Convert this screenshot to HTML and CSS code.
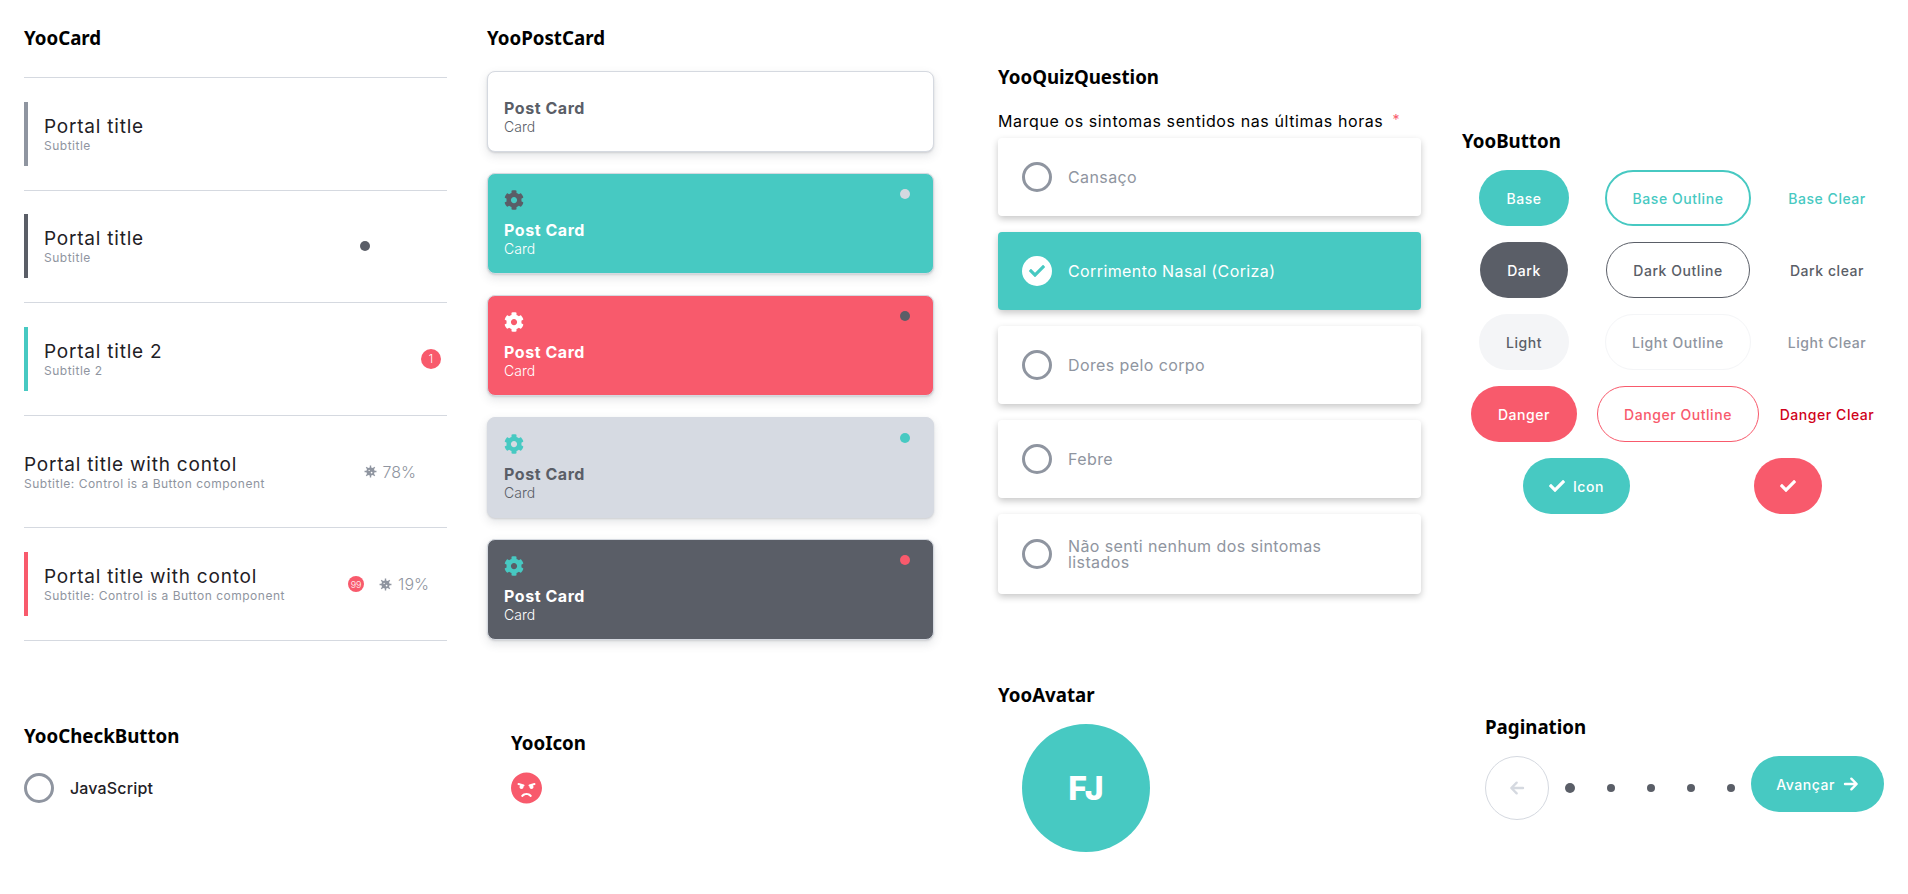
FILE: index.html
```html
<!DOCTYPE html>
<html lang="en">
<head>
    <meta charset="UTF-8">
    <meta name="viewport" content="width=device-width, initial-scale=1.0">
    <title>Yoo Components</title>

    <link rel="stylesheet" href="styles.css">
</head>
<body>
    <!-- Icon sprites -->
    <svg class="sprites" aria-hidden="true">
        <symbol id="i-cog" viewBox="0 0 512 512">
            <path d="M487.4 315.7l-42.6-24.6c4.3-23.2 4.3-47 0-70.2l42.6-24.6c4.9-2.8 7.1-8.6 5.5-14-11.1-35.6-30-67.8-54.7-94.6-3.8-4.1-10-5.1-14.8-2.3L380.8 110c-17.9-15.4-38.5-27.3-60.8-35.1V25.8c0-5.6-3.9-10.5-9.4-11.7-36.7-8.2-74.3-7.8-109.2 0-5.5 1.2-9.4 6.1-9.4 11.7V75c-22.2 7.9-42.8 19.8-60.8 35.1L88.7 85.5c-4.9-2.8-11-1.9-14.8 2.3-24.7 26.7-43.6 58.9-54.7 94.6-1.7 5.4.6 11.2 5.5 14L67.3 221c-4.3 23.2-4.3 47 0 70.2l-42.6 24.6c-4.9 2.8-7.1 8.6-5.5 14 11.1 35.6 30 67.8 54.7 94.6 3.8 4.1 10 5.1 14.8 2.3l42.6-24.6c17.9 15.4 38.5 27.3 60.8 35.1v49.2c0 5.6 3.9 10.5 9.4 11.7 36.7 8.2 74.3 7.8 109.2 0 5.5-1.2 9.4-6.1 9.4-11.7v-49.2c22.2-7.9 42.8-19.8 60.8-35.1l42.6 24.6c4.9 2.8 11 1.9 14.8-2.3 24.7-26.7 43.6-58.9 54.7-94.6 1.5-5.5-.7-11.3-5.6-14.1zM256 336c-44.1 0-80-35.9-80-80s35.9-80 80-80 80 35.9 80 80-35.9 80-80 80z"/>
        </symbol>
        <symbol id="i-check" viewBox="0 0 512 512">
            <path d="M173.898 439.404l-166.4-166.4c-9.997-9.997-9.997-26.206 0-36.204l36.203-36.204c9.997-10 26.207-10 36.204 0L192 312.69 432.095 72.596c9.997-9.997 26.207-9.997 36.204 0l36.203 36.204c9.997 9.997 9.997 26.206 0 36.204l-294.4 294.401c-9.998 9.997-26.207 9.997-36.204-.001z"/>
        </symbol>
        <symbol id="i-virus" viewBox="0 0 24 24">
            <circle cx="12" cy="12" r="7.5"/>
            <path d="M12 1v22M1 12h22M4.2 4.2l15.6 15.6M19.8 4.2L4.2 19.8" stroke="currentColor" stroke-width="2.6"/>
            <circle cx="9.5" cy="10" r="1.2" fill="#fff"/>
            <circle cx="14" cy="14" r="1.6" fill="#fff"/>
        </symbol>
        <symbol id="i-angry" viewBox="0 0 496 512">
            <path d="M248 8C111 8 0 119 0 256s111 248 248 248 248-111 248-248S385 8 248 8zM136 240c0-9.3 4.1-17.5 10.5-23.4l-31-9.3c-8.5-2.5-13.3-11.5-10.7-19.9 2.5-8.5 11.4-13.2 19.9-10.7l80 24c8.5 2.5 13.3 11.5 10.7 19.9-2.1 6.9-8.4 11.4-15.3 11.4-.5 0-1.1-.2-1.7-.2.7 2.7 1.7 5.3 1.7 8.2 0 17.7-14.3 32-32 32S136 257.7 136 240zm168 154.2c-27.8-33.4-84.2-33.4-112.1 0-13.5 16.3-38.2-4.2-24.6-20.5 20-24 49.4-37.8 80.6-37.8s60.6 13.8 80.6 37.8c13.8 16.5-11.1 36.6-24.5 20.5zm76.6-186.9l-31 9.3c6.3 5.8 10.5 14.1 10.5 23.4 0 17.7-14.3 32-32 32s-32-14.3-32-32c0-2.9.9-5.6 1.7-8.2-.6.1-1.1.2-1.7.2-6.9 0-13.2-4.5-15.3-11.4-2.5-8.5 2.3-17.4 10.7-19.9l80-24c8.4-2.5 17.4 2.3 19.9 10.7 2.5 8.5-2.3 17.4-10.8 19.9z"/>
        </symbol>
        <symbol id="i-arrow" viewBox="0 0 24 24">
            <path d="M3 12h17M12.5 4l8 8-8 8" fill="none" stroke="currentColor" stroke-width="3.6" stroke-linecap="round" stroke-linejoin="round"/>
        </symbol>
    </svg>

    <main class="page">
        <!-- YooCard -->
        <section class="col-card">
            <h3 class="heading">YooCard</h3>
            <div class="card-list">
                <div class="card-row">
                    <div class="card-text bar bar-gray">
                        <div class="card-title">Portal title</div>
                        <div class="card-sub">Subtitle</div>
                    </div>
                </div>
                <div class="card-row">
                    <div class="card-text bar bar-dark">
                        <div class="card-title">Portal title</div>
                        <div class="card-sub">Subtitle</div>
                    </div>
                    <div class="control control-dot"><span class="dot dot-dark"></span></div>
                </div>
                <div class="card-row">
                    <div class="card-text bar bar-base">
                        <div class="card-title">Portal title 2</div>
                        <div class="card-sub">Subtitle 2</div>
                    </div>
                    <div class="control control-badge"><span class="badge">1</span></div>
                </div>
                <div class="card-row">
                    <div class="card-text">
                        <div class="card-title">Portal title with contol</div>
                        <div class="card-sub">Subtitle: Control is a Button component</div>
                    </div>
                    <div class="control control-pct">
                        <svg class="virus"><use href="#i-virus"/></svg>
                        <span class="pct">78%</span>
                    </div>
                </div>
                <div class="card-row">
                    <div class="card-text bar bar-danger">
                        <div class="card-title">Portal title with contol</div>
                        <div class="card-sub">Subtitle: Control is a Button component</div>
                    </div>
                    <div class="control control-both">
                        <span class="badge badge-small">99</span>
                        <svg class="virus"><use href="#i-virus"/></svg>
                        <span class="pct">19%</span>
                    </div>
                </div>
            </div>
        </section>

        <!-- YooPostCard -->
        <section class="col-post">
            <h3 class="heading">YooPostCard</h3>
            <div class="post-list">
                <div class="post post-white">
                    <div class="post-title">Post Card</div>
                    <div class="post-sub">Card</div>
                </div>
                <div class="post post-base">
                    <div class="post-top">
                        <svg class="cog"><use href="#i-cog"/></svg>
                        <span class="dot"></span>
                    </div>
                    <div class="post-title">Post Card</div>
                    <div class="post-sub">Card</div>
                </div>
                <div class="post post-danger">
                    <div class="post-top">
                        <svg class="cog"><use href="#i-cog"/></svg>
                        <span class="dot"></span>
                    </div>
                    <div class="post-title">Post Card</div>
                    <div class="post-sub">Card</div>
                </div>
                <div class="post post-light">
                    <div class="post-top">
                        <svg class="cog"><use href="#i-cog"/></svg>
                        <span class="dot"></span>
                    </div>
                    <div class="post-title">Post Card</div>
                    <div class="post-sub">Card</div>
                </div>
                <div class="post post-dark">
                    <div class="post-top">
                        <svg class="cog"><use href="#i-cog"/></svg>
                        <span class="dot"></span>
                    </div>
                    <div class="post-title">Post Card</div>
                    <div class="post-sub">Card</div>
                </div>
            </div>
        </section>

        <!-- YooQuizQuestion -->
        <section class="col-quiz">
            <h3 class="heading">YooQuizQuestion</h3>
            <div class="quiz-label">Marque os sintomas sentidos nas últimas horas <span class="required">*</span></div>
            <div class="quiz-list">
                <div class="option"><span class="radio"></span><span>Cansaço</span></div>
                <div class="option option-on">
                    <span class="radio radio-on"><svg class="radio-check"><use href="#i-check"/></svg></span>
                    <span>Corrimento Nasal (Coriza)</span>
                </div>
                <div class="option"><span class="radio"></span><span>Dores pelo corpo</span></div>
                <div class="option"><span class="radio"></span><span>Febre</span></div>
                <div class="option option-tall"><span class="radio"></span><span class="option-wrap">Não senti nenhum dos sintomas listados</span></div>
            </div>
        </section>

        <!-- YooButton -->
        <section class="col-button">
            <h3 class="heading">YooButton</h3>
            <div class="button-grid">
                <button class="btn btn-base">Base</button>
                <button class="btn out-base">Base Outline</button>
                <button class="btn clear-base">Base Clear</button>
                <button class="btn btn-dark">Dark</button>
                <button class="btn out-dark">Dark Outline</button>
                <button class="btn clear-dark">Dark clear</button>
                <button class="btn btn-light">Light</button>
                <button class="btn out-light">Light Outline</button>
                <button class="btn clear-light">Light Clear</button>
                <button class="btn btn-danger">Danger</button>
                <button class="btn out-danger">Danger Outline</button>
                <button class="btn clear-danger">Danger Clear</button>
            </div>
            <div class="button-icons">
                <button class="btn btn-base btn-with-icon"><svg class="btn-icon"><use href="#i-check"/></svg>Icon</button>
                <button class="btn btn-danger btn-round"><svg class="btn-icon"><use href="#i-check"/></svg></button>
            </div>
        </section>

        <!-- YooCheckButton -->
        <section class="col-check">
            <h3 class="heading">YooCheckButton</h3>
            <div class="check-button"><span class="radio"></span><span>JavaScript</span></div>
        </section>

        <!-- YooIcon -->
        <section class="col-icon">
            <h3 class="heading">YooIcon</h3>
            <svg class="angry"><use href="#i-angry"/></svg>
        </section>

        <!-- YooAvatar -->
        <section class="col-avatar">
            <h3 class="heading">YooAvatar</h3>
            <div class="avatar">FJ</div>
        </section>

        <!-- Pagination -->
        <section class="col-pagination">
            <h3 class="heading">Pagination</h3>
            <div class="pagination">
                <button class="page-prev"><svg class="prev-icon"><use href="#i-arrow"/></svg></button>
                <div class="page-dots">
                    <span class="page-dot page-dot-on"></span>
                    <span class="page-dot"></span>
                    <span class="page-dot"></span>
                    <span class="page-dot"></span>
                    <span class="page-dot"></span>
                </div>
                <button class="btn btn-base page-next">Avançar<svg class="next-icon"><use href="#i-arrow"/></svg></button>
            </div>
        </section>
    </main>
</body>
</html>
```

FILE: styles.css
```css
body {
    margin: 0;
    background: #ffffff;
    color: #1f2126;
    font-family: 'Inter', 'Liberation Sans', sans-serif;
}

.sprites {
    display: none;
}

.page {
    display: grid;
    grid-template-columns: 487px 511px 464px 446px;
    grid-template-rows: 660px auto;
    align-items: start;
}

.heading {
    margin: 0;
    font-family: 'Noto Sans', sans-serif;
    font-size: 18.72px;
    font-weight: 700;
    line-height: 26px;
    color: #000000;
}

/* YooCard */
.col-card {
    padding: 25px 40px 0 24px;
}

.card-list {
    margin-top: 26px;
    border-top: 1px solid #d5d9e0;
}

.card-row {
    display: flex;
    justify-content: space-between;
    align-items: center;
    height: 112.6px;
    box-sizing: border-box;
    border-bottom: 1px solid #d5d9e0;
}

.card-text {
    box-sizing: border-box;
    padding-top: 4px;
}

.card-title {
    font-size: 19px;
    line-height: 19px;
    letter-spacing: 0.78px;
}

.card-sub {
    font-size: 12px;
    line-height: 19px;
    color: #8f95a0;
    letter-spacing: 0.5px;
}

.bar {
    display: flex;
    flex-direction: column;
    justify-content: center;
    height: 64px;
    padding-left: 16px;
    border-left: 4px solid;
}

.bar-gray {
    border-color: #8f95a0;
}

.bar-dark {
    border-color: #5a5e67;
}

.bar-base {
    border-color: #47c9c2;
}

.bar-danger {
    border-color: #f85a6c;
}

.control {
    display: flex;
    align-items: center;
}

.control-dot {
    margin-right: 77px;
}

.control-badge {
    margin-right: 6px;
}

.control-pct {
    margin-right: 31px;
}

.control-both {
    margin-right: 18px;
}

.dot {
    display: block;
    width: 10px;
    height: 10px;
    border-radius: 50%;
}

.dot-dark {
    background: #5a5e67;
}

.badge {
    display: flex;
    align-items: center;
    justify-content: center;
    width: 20px;
    height: 20px;
    border-radius: 50%;
    background: #f85a6c;
    color: #ffffff;
    font-size: 11px;
    font-weight: 300;
}

.badge-small {
    width: 16px;
    height: 16px;
    margin-right: 15px;
    font-size: 9px;
}

.virus {
    width: 13px;
    height: 13px;
    margin-right: 6px;
    fill: #8f95a0;
    color: #8f95a0;
}

.pct {
    font-size: 16px;
    font-weight: 300;
    color: #8f95a0;
}

/* YooPostCard */
.col-post {
    padding-top: 25px;
    width: 447px;
}

.post-list {
    display: flex;
    flex-direction: column;
    gap: 21px;
    margin-top: 20px;
}

.post {
    box-sizing: border-box;
    height: 101px;
    padding: 16px 23px 0 16px;
    border: 1px solid #d5d9e0;
    border-radius: 8px;
    box-shadow: 0 1px 2px rgba(90, 94, 103, 0.2), 0 4px 10px rgba(90, 94, 103, 0.16);
}

.post-white {
    height: 81px;
    padding-top: 26px;
    background: #ffffff;
    color: #5a5e67;
}

.post-top {
    display: flex;
    justify-content: space-between;
    align-items: flex-start;
    height: 30px;
}

.post-top .dot {
    margin-top: -1px;
}

.cog {
    width: 20px;
    height: 20px;
}

.post-title {
    font-size: 16px;
    font-weight: 700;
    line-height: 21px;
    letter-spacing: 0.55px;
}

.post-sub {
    font-size: 14px;
    font-weight: 300;
    line-height: 15px;
}

.post-base {
    background: #47c9c2;
    color: #ffffff;
}

.post-base .cog {
    fill: #5a5e67;
}

.post-base .dot {
    background: #d5d9e0;
}

.post-danger {
    background: #f85a6c;
    color: #ffffff;
}

.post-danger .cog {
    fill: #ffffff;
}

.post-danger .dot {
    background: #5a5e67;
}

.post-light {
    background: #d6dae2;
    border-color: #d6dae2;
    color: #5a5e67;
}

.post-light .cog {
    fill: #47c9c2;
}

.post-light .dot {
    background: #47c9c2;
}

.post-dark {
    background: #5a5e67;
    color: #ffffff;
}

.post-dark .cog {
    fill: #47c9c2;
}

.post-dark .dot {
    background: #f85a6c;
}

/* YooQuizQuestion */
.col-quiz {
    padding-top: 64px;
    width: 423px;
}

.quiz-label {
    margin-top: 19px;
    font-size: 16px;
    line-height: 22px;
    letter-spacing: 0.6px;
    color: #000000;
    white-space: nowrap;
}

.required {
    margin-left: 4px;
    color: #f85a6c;
    font-size: 14px;
    vertical-align: 2px;
}

.quiz-list {
    display: flex;
    flex-direction: column;
    gap: 16px;
    margin-top: 6px;
}

.option {
    display: flex;
    align-items: center;
    gap: 16px;
    box-sizing: border-box;
    height: 78px;
    padding: 0 24px;
    border-radius: 4px;
    background: #ffffff;
    box-shadow: 0 3px 7px rgba(0, 0, 0, 0.22);
    font-size: 16px;
    line-height: 16px;
    letter-spacing: 0.4px;
    color: #8f95a0;
}

.option-on {
    background: #47c9c2;
    color: #ffffff;
}

.option-tall {
    height: 80px;
}

.option-wrap {
    max-width: 300px;
}

.radio {
    display: flex;
    align-items: center;
    justify-content: center;
    flex: none;
    box-sizing: border-box;
    width: 30px;
    height: 30px;
    border: 3px solid #8f95a0;
    border-radius: 50%;
}

.radio-on {
    border: none;
    background: #ffffff;
}

.radio-check {
    width: 16px;
    height: 16px;
    fill: #47c9c2;
}

/* YooButton */
.col-button {
    padding-top: 128px;
}

.button-grid {
    display: grid;
    grid-template-columns: 124px 184px 114px;
    gap: 16px 0;
    justify-items: center;
    margin-top: 16px;
}

.button-icons {
    display: grid;
    grid-template-columns: 229px 194px;
    justify-items: center;
    margin-top: 16px;
}

.btn {
    display: flex;
    align-items: center;
    justify-content: center;
    box-sizing: border-box;
    height: 56px;
    padding: 0 26px;
    border: 1px solid transparent;
    border-radius: 28px;
    background: transparent;
    font-family: 'Inter', 'Liberation Sans', sans-serif;
    font-size: 14px;
    font-weight: 500;
    letter-spacing: 0.55px;
    white-space: nowrap;
}

.btn-base {
    background: #47c9c2;
    color: #ffffff;
}

.btn-dark {
    background: #5a5e67;
    color: #ffffff;
}

.btn-light {
    background: #f4f5f7;
    color: #5a5e67;
}

.btn-danger {
    background: #f85a6c;
    color: #ffffff;
}

.out-base {
    border: 2px solid #47c9c2;
    color: #47c9c2;
}

.out-dark {
    border-color: #5a5e67;
    color: #5a5e67;
}

.out-light {
    border-color: #f4f5f7;
    color: #8f95a0;
}

.out-danger {
    border-color: #f85a6c;
    color: #f85a6c;
}

.clear-base {
    color: #47c9c2;
}

.clear-dark {
    color: #5a5e67;
}

.clear-light {
    color: #8f95a0;
}

.clear-danger {
    color: #d0021b;
}

.btn-with-icon {
    width: 107px;
    padding: 0;
}

.btn-icon {
    width: 16px;
    height: 16px;
    margin-right: 8px;
    fill: #ffffff;
}

.btn-round {
    width: 68px;
    padding: 0;
}

.btn-round .btn-icon {
    margin-right: 0;
}

/* Bottom row */
.col-check {
    padding: 63px 0 0 24px;
}

.check-button {
    display: flex;
    align-items: center;
    gap: 16px;
    margin-top: 24px;
    font-size: 16px;
    font-weight: 500;
    letter-spacing: 0.15px;
    color: #1f2126;
}

.col-icon {
    padding: 70px 0 0 24px;
}

.angry {
    display: block;
    width: 31px;
    height: 32px;
    margin-top: 16px;
    fill: #f85a6c;
}

.col-avatar {
    padding-top: 22px;
}

.avatar {
    display: flex;
    align-items: center;
    justify-content: center;
    width: 128px;
    height: 128px;
    margin: 16px 0 0 24px;
    border-radius: 50%;
    background: #47c9c2;
    color: #ffffff;
    font-size: 32px;
    font-weight: 800;
}

.col-pagination {
    padding: 54px 0 0 23px;
}

.pagination {
    display: flex;
    align-items: flex-start;
    margin-top: 16px;
}

.page-prev {
    display: flex;
    align-items: center;
    justify-content: center;
    box-sizing: border-box;
    width: 64px;
    height: 64px;
    padding: 0;
    border: 1px solid #d5d9e0;
    border-radius: 50%;
    background: #ffffff;
    color: #d5d9e0;
}

.prev-icon {
    width: 16px;
    height: 16px;
    transform: scaleX(-1);
}

.page-dots {
    display: flex;
    align-items: center;
    gap: 32px;
    height: 64px;
    margin: 0 16px;
}

.page-dot {
    width: 8px;
    height: 8px;
    border-radius: 50%;
    background: #5a5e67;
}

.page-dot-on {
    width: 10px;
    height: 10px;
}

.page-next {
    width: 133px;
    padding: 0;
}

.next-icon {
    width: 16px;
    height: 16px;
    margin-left: 8px;
}
```
